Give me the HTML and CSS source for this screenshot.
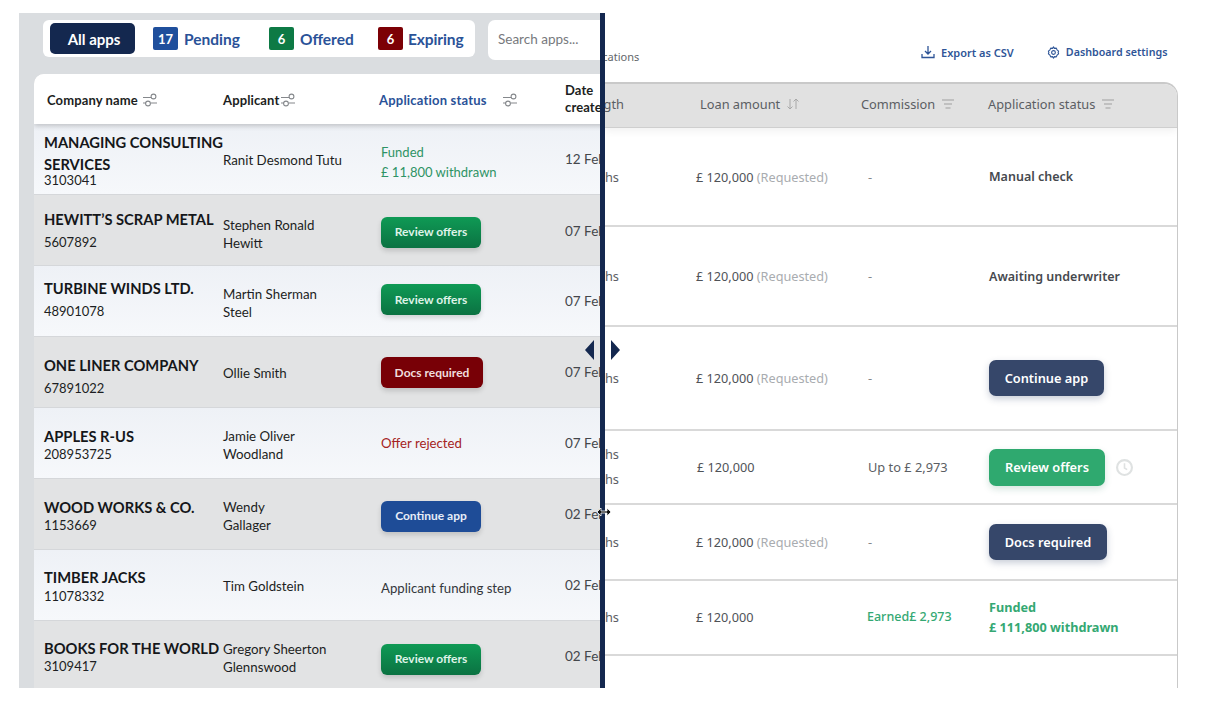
FILE: index.html
```html
<!DOCTYPE html>
<html lang="en">
<head>
<meta charset="utf-8">
<title>Applications comparison</title>
<link rel="stylesheet" href="styles.css">
</head>
<body>
<svg class="defs" width="0" height="0" aria-hidden="true">
  <symbol id="sliders" viewBox="0 0 14 14">
    <path d="M0 4.500h8M0 10h3M8 10h6" fill="none" stroke="currentColor" stroke-width="1.100"/>
    <circle cx="10.500" cy="3.500" r="2.400" fill="none" stroke="currentColor" stroke-width="1.100"/>
    <circle cx="5" cy="10.500" r="2.400" fill="none" stroke="currentColor" stroke-width="1.100"/>
  </symbol>
  <symbol id="lines" viewBox="0 0 12 10">
    <path d="M0 1h12M2 5h8M3.500 9h5" fill="none" stroke="currentColor" stroke-width="1.100"/>
  </symbol>
</svg>
<main class="stage">
  <section class="old">
    <div class="old-top">
      <nav class="tabs">
        <span class="tab-all">All apps</span>
        <span class="tab tab-pending"><b class="badge blue">17</b>Pending</span>
        <span class="tab tab-offered"><b class="badge green">6</b>Offered</span>
        <span class="tab tab-expiring"><b class="badge red">6</b>Expiring</span>
      </nav>
      <div class="search">Search apps...</div>
    </div>
    <div class="old-table">
      <div class="old-row old-head">
        <div class="oh">Company name <svg class="ic-s"><use href="#sliders"/></svg></div>
        <div class="oh">Applicant <svg class="ic-s ic-near"><use href="#sliders"/></svg></div>
        <div class="oh oh-active">Application status <svg class="ic-s ic-far"><use href="#sliders"/></svg></div>
        <div class="oh oh-date">Date<br>created</div>
      </div>
      <div class="old-row light o1">
        <div class="co"><strong class="co-wrap">MANAGING CONSULTING SERVICES</strong><span>3103041</span></div>
        <div class="ap">Ranit Desmond Tutu</div>
        <div class="st st-green">Funded<br>£ 11,800 withdrawn</div>
        <div class="dt">12 Feb 2021</div>
      </div>
      <div class="old-row grey o2">
        <div class="co"><strong>HEWITT’S SCRAP METAL</strong><span>5607892</span></div>
        <div class="ap">Stephen Ronald<br>Hewitt</div>
        <div class="st"><span class="obtn o-green">Review offers</span></div>
        <div class="dt">07 Feb 2021</div>
      </div>
      <div class="old-row light o3">
        <div class="co"><strong>TURBINE WINDS LTD.</strong><span>48901078</span></div>
        <div class="ap">Martin Sherman<br>Steel</div>
        <div class="st"><span class="obtn o-green">Review offers</span></div>
        <div class="dt">07 Feb 2021</div>
      </div>
      <div class="old-row grey o4">
        <div class="co"><strong>ONE LINER COMPANY</strong><span>67891022</span></div>
        <div class="ap">Ollie Smith</div>
        <div class="st"><span class="obtn o-red">Docs required</span></div>
        <div class="dt">07 Feb 2021</div>
      </div>
      <div class="old-row light o5">
        <div class="co co-tight"><strong>APPLES R-US</strong><span>208953725</span></div>
        <div class="ap">Jamie Oliver<br>Woodland</div>
        <div class="st st-red">Offer rejected</div>
        <div class="dt">07 Feb 2021</div>
      </div>
      <div class="old-row grey o6">
        <div class="co co-tight"><strong>WOOD WORKS &amp; CO.</strong><span>1153669</span></div>
        <div class="ap">Wendy<br>Gallager</div>
        <div class="st"><span class="obtn o-blue">Continue app</span></div>
        <div class="dt">02 Feb 2021</div>
      </div>
      <div class="old-row light o7">
        <div class="co co-tight"><strong>TIMBER JACKS</strong><span>11078332</span></div>
        <div class="ap">Tim Goldstein</div>
        <div class="st">Applicant funding step</div>
        <div class="dt">02 Feb 2021</div>
      </div>
      <div class="old-row grey o8">
        <div class="co co-tight"><strong>BOOKS FOR THE WORLD</strong><span>3109417</span></div>
        <div class="ap">Gregory Sheerton<br>Glennswood</div>
        <div class="st"><span class="obtn o-green">Review offers</span></div>
        <div class="dt">02 Feb 2021</div>
      </div>
    </div>
  </section>

  <div class="divider">
    <svg class="handle" width="36" height="20" viewBox="0 0 36 20" aria-hidden="true">
      <path d="M9 0v20L0 10zM26 0v20l9-10z" fill="#14284f"/>
    </svg>
    <svg class="cursor" width="16" height="12" viewBox="0 0 16 12" aria-hidden="true">
      <path d="M1 6l4-4v3h6V2l4 4-4 4V7H5v3z" fill="#111" stroke="#fff" stroke-width=".8"/>
    </svg>
  </div>

  <section class="new">
    <div class="new-top">
      <span class="title">Applications</span>
      <span class="link">
        <svg class="ic-link" viewBox="0 0 14 14"><path d="M7 1v8M4 6l3 3 3-3M1 9v3.500h12V9" fill="none" stroke="currentColor" stroke-width="1.300"/></svg>
        Export as CSV
      </span>
      <span class="link link-set">
        <svg class="ic-link ic-gear" viewBox="0 0 14 14"><path d="M7 1l1 1.500 2-.2.800 1.800L12.500 5.500 12 7l.5 1.500-1.700 1.400-.8 1.800-2-.2L7 13l-1-1.500-2 .2-.8-1.800L1.500 8.500 2 7l-.5-1.500 1.700-1.400.8-1.800 2 .2z" fill="none" stroke="currentColor" stroke-width="1.200" stroke-linejoin="round"/><circle cx="7" cy="7" r="2" fill="none" stroke="currentColor" stroke-width="1.200"/></svg>
        Dashboard settings
      </span>
    </div>
    <div class="new-table">
      <div class="new-row new-head">
        <div class="n-term">Term length</div>
        <div class="nh nh-loan">Loan amount
          <svg class="ic-sort" viewBox="0 0 14 12"><path d="M4 1v10M1.500 8.500L4 11l2.500-2.500M10 11V1M7.500 3.500L10 1l2.500 2.500" fill="none" stroke="currentColor"/></svg>
        </div>
        <div class="nh nh-com">Commission <svg class="ic-l"><use href="#lines"/></svg></div>
        <div class="nh">Application status <svg class="ic-l"><use href="#lines"/></svg></div>
      </div>
      <div class="new-row r1">
        <div class="n-term">24 months</div>
        <div class="n-loan">£ 120,000 <em>(Requested)</em></div>
        <div class="n-com">-</div>
        <div class="n-st n-strong">Manual check</div>
      </div>
      <div class="new-row r2">
        <div class="n-term">24 months</div>
        <div class="n-loan">£ 120,000 <em>(Requested)</em></div>
        <div class="n-com">-</div>
        <div class="n-st n-strong">Awaiting underwriter</div>
      </div>
      <div class="new-row r3">
        <div class="n-term">24 months</div>
        <div class="n-loan">£ 120,000 <em>(Requested)</em></div>
        <div class="n-com">-</div>
        <div class="n-st"><span class="nbtn n-navy">Continue app</span></div>
      </div>
      <div class="new-row r4">
        <div class="n-term n-two">12 months<br>24 months</div>
        <div class="n-loan n-loan-plain">£ 120,000</div>
        <div class="n-com n-upto">Up to £ 2,973</div>
        <div class="n-st n-flex"><span class="nbtn n-green">Review offers</span>
          <svg class="ic-clock" viewBox="0 0 16 16"><circle cx="8" cy="8" r="7" fill="none" stroke="currentColor" stroke-width="2"/><path d="M8 4v4.500l2.500 1.500" fill="none" stroke="currentColor" stroke-width="1.500"/></svg>
        </div>
      </div>
      <div class="new-row r5">
        <div class="n-term">24 months</div>
        <div class="n-loan">£ 120,000 <em>(Requested)</em></div>
        <div class="n-com">-</div>
        <div class="n-st"><span class="nbtn n-navy n-wide">Docs required</span></div>
      </div>
      <div class="new-row r6">
        <div class="n-term">24 months</div>
        <div class="n-loan">£ 120,000</div>
        <div class="n-com n-earned">Earned£ 2,973</div>
        <div class="n-st n-funded">Funded<br>£ 111,800 withdrawn</div>
      </div>
      <div class="new-row r7"></div>
    </div>
  </section>
</main>
</body>
</html>
```
FILE: styles.css
```css
* { box-sizing: border-box; }
html, body { margin: 0; padding: 0; background: #fff; }
body { height: 704px; overflow: hidden; padding: 13px 0 16px 19px; }
.defs { position: absolute; }
.stage { display: flex; height: 675px; }

/* left pane */
.old {
  width: 581px; flex: none; overflow: hidden; background: #dadde0;
  font-family: Lato, "Liberation Sans", sans-serif; color: #1c1e22;
  display: flex; flex-direction: column;
}
.old-top { display: flex; padding: 7px 0 0 24px; height: 61px; flex: none; }
.tabs {
  width: 432px; height: 37px; background: #fff; border-radius: 6px;
  display: flex; align-items: center; padding-left: 7px; flex: none;
}
.tab-all {
  width: 85px; height: 31px; background: #14284f; color: #fff; border-radius: 5px; padding-left: 3px;
  font-size: 15px; font-weight: 700; display: flex; align-items: center; justify-content: center;
}
.tab { display: flex; align-items: center; color: #2a5298; font-size: 15.500px; font-weight: 700; }
.tab-pending { margin-left: 18px; width: 116px; }
.tab-offered { width: 109px; }
.tab-expiring { letter-spacing: -.1px; }
.badge {
  width: 25px; height: 23px; border-radius: 2px; color: #fff; font-size: 13px; font-weight: 700;
  display: flex; align-items: center; justify-content: center; margin-right: 6px; letter-spacing: 0;
}
.tab-expiring .badge { margin-right: 5px; }
.blue { background: #1f4f9c; }
.green { background: #0d7a45; }
.red { background: #7c0005; }
.search {
  margin-left: 13px; width: 130px; height: 40px; background: #fff; border-radius: 7px;
  padding: 11px 0 0 10px; font-size: 13.500px; color: #77797d; flex: none;
}
.old-table {
  margin-left: 15px; width: 590px; flex: 1; overflow: hidden;
  border-radius: 10px 0 0 0; background: #fff;
}
.old-row {
  display: grid; grid-template-columns: 179px 158px 184px 80px; padding-left: 10px;
  align-items: center; height: 71px; border-bottom: 1px solid #d5d7da;
}
.old-head {
  height: 50px; background: #fff; border-bottom: 0; box-shadow: 0 2px 5px rgba(0, 0, 0, .2);
  position: relative; padding-left: 13px; grid-template-columns: 176px 156px 186px 80px;
}
.oh { font-size: 13px; font-weight: 700; display: flex; align-items: center; margin-top: 2px; letter-spacing: .12px; }
.oh-active { color: #2a5298; letter-spacing: .2px; }
.oh-date { display: block; line-height: 17px; white-space: nowrap; margin-top: 0; }
.ic-s { width: 14px; height: 14px; margin-left: 5px; color: #85888c; }
.ic-near { margin-left: 2px; }
.ic-far { margin-left: 16px; }
.light { background: linear-gradient(#eef1f6, #f6f8fb); }
.grey { background: #e2e3e4; }

/* per-row nudges: margin-top on a centred cell moves it by half its value */
.o1 { --co: 2px; --ap: 2px; --st: 6px; --dt: 0; }
.o2 { --co: -2px; --ap: 8px; --st: 4px; --dt: 2px; }
.o3 { --co: -6px; --ap: 4px; --st: -3px; --dt: 0; }
.o4 { --co: 6px; --ap: 2px; --st: 1px; --dt: 0; }
.o5 { --co: 2px; --ap: 4px; --st: 0; --dt: 0; }
.o6 { --co: 2px; --ap: 4px; --st: 4px; --dt: 0; }
.o7 { --co: 0; --ap: 2px; --st: 6px; --dt: 0; }
.o8 { --co: 0; --ap: 4px; --st: 6px; --dt: 0; }

.co { font-size: 13px; line-height: 17px; margin-top: var(--co, 0); }
.co strong {
  display: block; font-size: 14.700px; font-weight: 700; line-height: 22px; white-space: nowrap;
  margin-bottom: 4px; color: #15171a;
}
.co strong.co-wrap { white-space: normal; width: 186px; margin-bottom: -3px; }
.co-tight strong { margin-bottom: -1px; }
.o7 .co-tight strong { margin-bottom: 0; }
.ap { font-size: 13.300px; line-height: 18px; color: #1c1e22; margin-top: var(--ap, 0); }
.st { font-size: 13.200px; line-height: 20px; color: #34373b; white-space: nowrap; margin-top: var(--st, 0); }
.st-green { color: #2e9365; font-size: 13px; }
.st-red { color: #a52222; }
.dt { font-size: 13.500px; color: #44474b; white-space: nowrap; margin-top: var(--dt, 0); }
.obtn {
  display: inline-flex; height: 31px; width: 100px; align-items: center; justify-content: center;
  border-radius: 6px; color: #dff3e8; font-size: 12px; font-weight: 700;
  box-shadow: 0 3px 5px rgba(0, 0, 0, .15);
}
.o-green { background: linear-gradient(#0f9a55, #0b7242); }
.o-red { background: #780006; width: 102px; color: #f0dddd; }
.o-blue { background: #1e4c97; width: 100px; color: #e6edf8; }

/* divider */
.divider { width: 5px; flex: none; background: #14284f; position: relative; }
.handle { position: absolute; left: -15px; top: 327px; }
.cursor { position: absolute; left: -4px; top: 493px; }

/* right pane */
.new {
  flex: 1; min-width: 0; overflow: hidden; background: #fff;
  font-family: "Noto Sans", "Open Sans", sans-serif; color: #4b4e53;
}
.new-top { height: 69px; display: flex; align-items: flex-start; padding-top: 31px; }
.title {
  font-size: 11px; color: #64676b; width: 345px; flex: none; margin-left: -29px; padding-top: 5px;
  white-space: nowrap;
}
.link {
  display: flex; align-items: center; font-size: 11px; font-weight: 600; color: #2f5597;
  white-space: nowrap; height: 16px; margin-right: 33px;
}
.link-set { font-size: 10.700px; }
.ic-link { width: 14px; height: 14px; margin-right: 6px; }
.ic-gear { width: 13px; height: 13px; }
.new-table {
  width: 574px; margin-left: -1px; height: 606px; border: solid #c9c9c9; border-width: 2px 1.500px 0 0;
  border-radius: 0 14px 0 0; overflow: hidden;
}
.new-row {
  display: grid; grid-template-columns: 92px 172px 121px 1fr; align-items: center;
  border-bottom: 2px solid #d9d9d9; white-space: nowrap;
}
.new-head {
  height: 44px; padding-bottom: 4px; background: #e1e1e1; border-bottom: 1px solid #cfcfcf;
  font-size: 12.800px; color: #5b5e63;
  box-shadow: 0 3px 8px rgba(0, 0, 0, .06); position: relative;
  grid-template-columns: 96px 161px 127px 1fr;
}
.nh { display: flex; align-items: center; }
.ic-sort { width: 14px; height: 12px; margin-left: 6px; color: #a8a8a8; }
.ic-l { width: 12px; height: 10px; margin-left: 7px; color: #a0a0a0; }
.n-term {
  display: flex; justify-content: flex-end; overflow: hidden; padding-right: 77px;
  font-size: 12.800px; color: #5b5e63;
}
.new-head .n-term { padding-right: 76px; }
.n-two { line-height: 25px; }
.n-loan { font-size: 12.700px; color: #4f5257; }
.n-loan-plain { margin-left: 1px; }
.n-loan em { font-style: normal; color: #a9acb0; }
.n-com { font-size: 12.800px; color: #85888c; }
.n-upto { color: #5b5e63; }
.n-earned { color: #34a873; font-weight: 500; margin-left: -1px; font-size: 12.500px; }
.n-st { font-size: 12.800px; }
.n-strong { font-weight: 600; color: #46494e; font-size: 12.500px; }
.n-flex { display: flex; align-items: center; }
.n-funded { color: #34a873; font-weight: 700; font-size: 12.700px; line-height: 20px; }
.nbtn {
  display: inline-flex; align-items: center; justify-content: center; width: 115px; height: 36px;
  border-radius: 7px; color: #fff; font-weight: 600; font-size: 12.800px;
  box-shadow: 0 3px 7px rgba(40, 60, 100, .25);
}
.n-navy { background: #36476a; }
.n-green { background: #2fa96f; width: 116px; height: 37px; box-shadow: 0 3px 7px rgba(40, 120, 90, .2); }
.n-wide { width: 118px; }
.ic-clock { width: 17px; height: 17px; margin-left: 11px; color: #dfe2e2; }
.r1 { height: 99px; } .r2 { height: 100px; } .r3 { height: 104px; }
.r4 { height: 74px; } .r5 { height: 76px; } .r6 { height: 75px; padding-bottom: 2px; }
.r7 { height: 40px; border-bottom: 0; }
```
